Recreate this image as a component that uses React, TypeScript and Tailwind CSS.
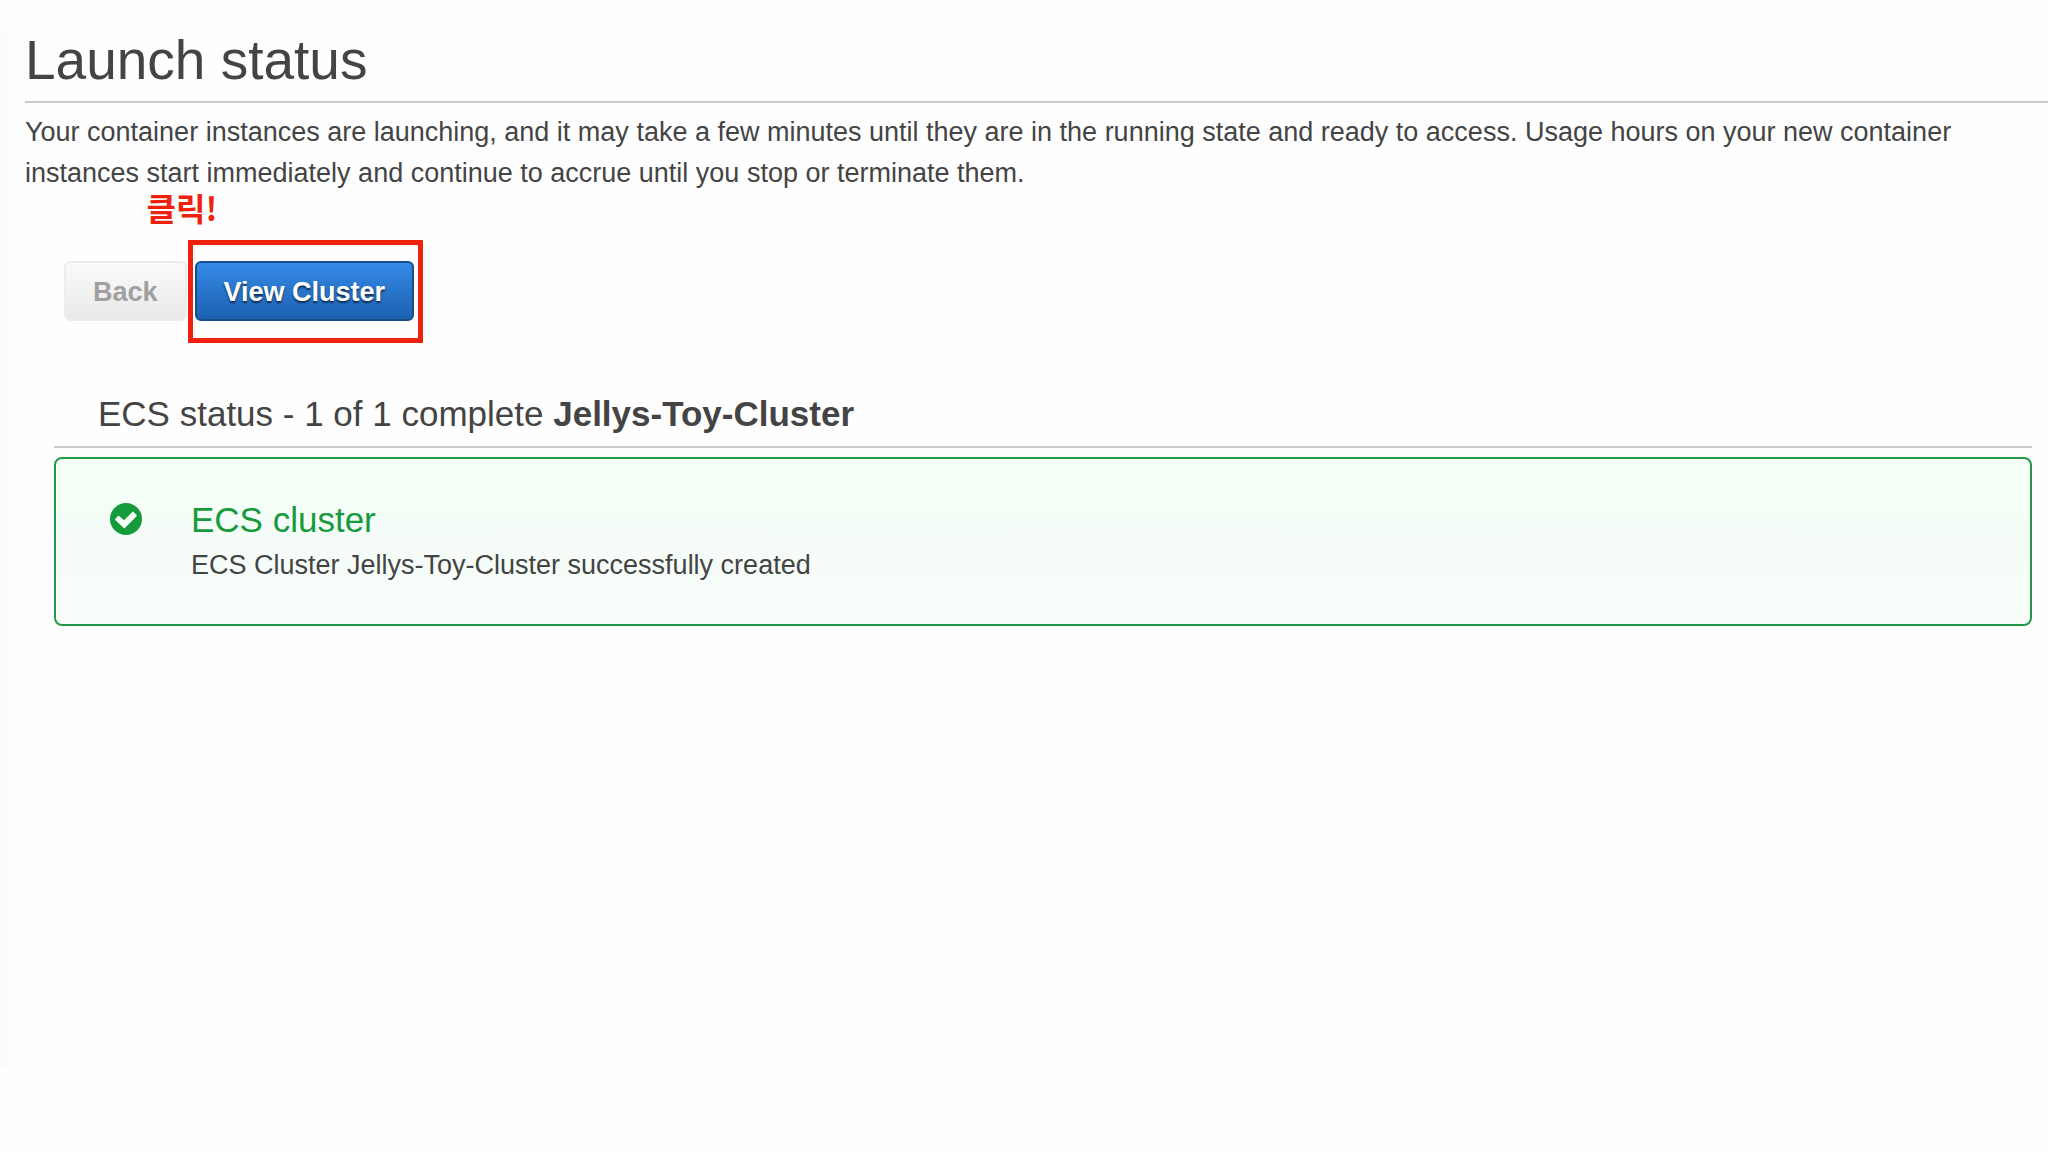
import React from "react";

function CheckCircle() {
  return (
    <svg viewBox="0 0 32 32" className="size-8 shrink-0" aria-hidden="true">
      <circle cx="16" cy="16" r="16" fill="#159a3c" />
      <path
        d="M5.9 16.3 L8.6 13.6 L14.2 18.3 L22.9 9.6 L26 12.6 L14.3 24.4 Z"
        fill="#f6fff8"
        stroke="#f6fff8"
        strokeWidth="1.6"
        strokeLinejoin="round"
      />
    </svg>
  );
}

function Actions() {
  return (
    <div className="mt-[67px] flex gap-2 pl-[39px]">
      <button
        type="button"
        disabled
        className="h-[60px] rounded-md border-2 border-[#ededed] bg-linear-to-b from-[#fafafa] to-[#e9e9e9] px-[27px] pt-[2px] text-[27px] font-bold text-[#a0a0a0]"
      >
        Back
      </button>
      <div className="relative">
        <button
          type="button"
          className="h-[60px] rounded-md border-2 border-[#174f8c] bg-linear-to-b from-[#358ae8] to-[#1d61b0] px-[27px] pt-[2px] text-[27px] font-bold text-white [text-shadow:0_2px_2px_#0d2c50]"
        >
          View Cluster
        </button>
        <span className="pointer-events-none absolute -top-[21px] -right-[9px] -bottom-[22px] -left-[7px] border-[5px] border-[#ee220c]" />
        <span className="absolute -top-[74px] -left-[48px] font-['Noto_Sans_CJK_KR',sans-serif] text-[32px] leading-[40px] font-bold whitespace-nowrap text-[#ee220c]">
          클릭!
        </span>
      </div>
    </div>
  );
}

function EcsStatus() {
  return (
    <section className="mt-[67px] pr-4 pl-[29px]">
      <h2 className="border-b-2 border-[#cccccc] pb-[6px] pl-[44px] text-[35px] leading-[52px]">
        ECS status - 1 of 1 complete <strong>Jellys-Toy-Cluster</strong>
      </h2>
      <div className="mt-[9px] flex gap-[49px] rounded-lg border-2 border-[#259647] bg-linear-to-b from-[#f5fff6] via-[#f5fcf8] to-[#f8fdf9] px-[54px] pt-[38px] pb-[37px]">
        <div className="pt-[6px]">
          <CheckCircle />
        </div>
        <div>
          <h3 className="text-[35px] leading-[46px] text-[#159a3c]">ECS cluster</h3>
          <p className="text-[27px] leading-[44px]">
            ECS Cluster Jellys-Toy-Cluster successfully created
          </p>
        </div>
      </div>
    </section>
  );
}

export default function App() {
  return (
    <div className="flex min-h-screen bg-[#fefefe] pt-[33px] pb-[84px] font-['Liberation_Sans',Arial,sans-serif] text-[#444444]">
      <div className="w-[18px] shrink-0 bg-linear-to-r from-[#fafafa] to-[#fefefe]" />
      <main className="min-w-0 flex-1 pl-[7px]">
        <h1 className="border-b-2 border-[#cccccc] pb-[14px] text-[55px] leading-[54px]">
          Launch status
        </h1>
        <p className="mt-[9px] pr-10 text-[27px] leading-[41px]">
          Your container instances are launching, and it may take a few minutes until they are in
          the running state and ready to access. Usage hours on your new container instances start
          immediately and continue to accrue until you stop or terminate them.
        </p>
        <Actions />
        <EcsStatus />
      </main>
    </div>
  );
}
